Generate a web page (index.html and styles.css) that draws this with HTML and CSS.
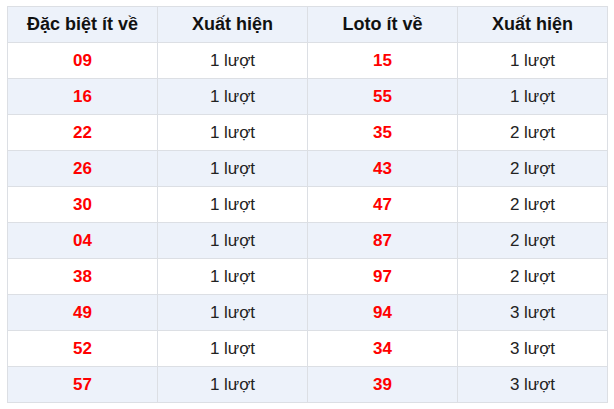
FILE: index.html
```html
<!DOCTYPE html>
<html lang="vi">
<head>
<meta charset="utf-8">
<link rel="stylesheet" href="styles.css">
</head>
<body>
<table class="stats">
<thead>
<tr><th>Đặc biệt ít về</th><th>Xuất hiện</th><th>Loto ít về</th><th>Xuất hiện</th></tr>
</thead>
<tbody>
<tr><td class="num">09</td><td>1 lượt</td><td class="num">15</td><td>1 lượt</td></tr>
<tr><td class="num">16</td><td>1 lượt</td><td class="num">55</td><td>1 lượt</td></tr>
<tr><td class="num">22</td><td>1 lượt</td><td class="num">35</td><td>2 lượt</td></tr>
<tr><td class="num">26</td><td>1 lượt</td><td class="num">43</td><td>2 lượt</td></tr>
<tr><td class="num">30</td><td>1 lượt</td><td class="num">47</td><td>2 lượt</td></tr>
<tr><td class="num">04</td><td>1 lượt</td><td class="num">87</td><td>2 lượt</td></tr>
<tr><td class="num">38</td><td>1 lượt</td><td class="num">97</td><td>2 lượt</td></tr>
<tr><td class="num">49</td><td>1 lượt</td><td class="num">94</td><td>3 lượt</td></tr>
<tr><td class="num">52</td><td>1 lượt</td><td class="num">34</td><td>3 lượt</td></tr>
<tr><td class="num">57</td><td>1 lượt</td><td class="num">39</td><td>3 lượt</td></tr>
</tbody>
</table>
</body>
</html>
```
FILE: styles.css
```css
html, body {
  margin: 0;
  padding: 0;
  background: #fff;
}
body {
  padding: 6px 7px;
  font-family: "Liberation Sans", Arial, sans-serif;
}
.stats {
  border-collapse: collapse;
  table-layout: fixed;
  width: 601px;
}
.stats th, .stats td {
  border: 1px solid #dcdfe4;
  height: 35px;
  padding: 0;
  text-align: center;
  vertical-align: middle;
}
.stats th {
  background: #edf2fa;
  font-size: 18px;
  font-weight: bold;
  color: #111;
}
.stats td {
  font-size: 17px;
  color: #222;
}
.stats tbody tr:nth-child(even) td {
  background: #edf2fa;
}
.stats td.num {
  color: #ff0000;
  font-weight: bold;
  font-size: 17px;
}
```
